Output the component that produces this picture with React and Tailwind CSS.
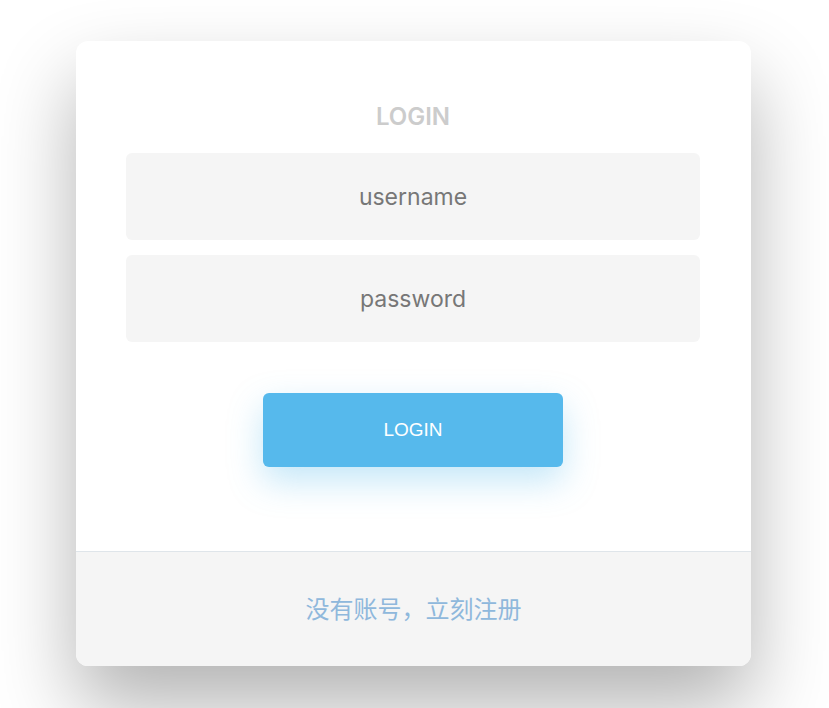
export default function App() {
  return (
    <div className="min-h-[708px] w-full bg-white pt-[41px] pr-[2px] font-['Inter','Noto_Sans_CJK_SC',sans-serif]">
      <div className="mx-auto w-[675px] overflow-hidden rounded-xl bg-white shadow-[0_40px_80px_rgba(0,0,0,0.3)]">
        <div className="flex flex-col items-center pt-[60px] pr-[51px] pb-[84px] pl-[50px]">
          <h1 className="h-[31px] text-[24px] leading-[31px] font-semibold text-[#cccccc]">LOGIN</h1>
          <div className="mt-[21px] flex w-full flex-col gap-[15px]">
            <input
              className="h-[87px] w-full rounded-md bg-[#f5f5f5] text-center text-[23px] text-[#777777] outline-none placeholder:text-[#777777]"
              placeholder="username"
            />
            <input
              type="password"
              className="h-[87px] w-full rounded-md bg-[#f5f5f5] text-center text-[23px] text-[#777777] outline-none placeholder:text-[#777777]"
              placeholder="password"
            />
          </div>
          <button
            type="button"
            className="mt-[51px] h-[74px] w-[300px] rounded-md bg-[#56b9ec] font-['Liberation_Sans',sans-serif] text-[19px] text-white shadow-[0_14px_34px_rgba(86,185,236,0.35)]"
          >
            LOGIN
          </button>
        </div>
        <div className="flex h-[115px] items-center justify-center border-t border-[#dfe5ea] bg-[#f5f5f5] pb-[3px]">
          <span className="font-['Noto_Sans_CJK_SC',sans-serif] text-[24px] text-[#8fb8dc]">没有账号，立刻注册</span>
        </div>
      </div>
    </div>
  )
}
